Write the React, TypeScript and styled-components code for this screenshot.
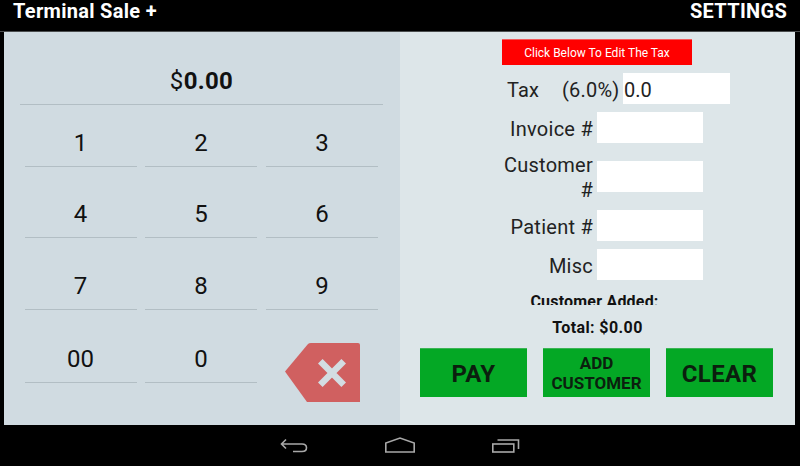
import React from "react";
import styled, { createGlobalStyle } from "styled-components";

const Global = createGlobalStyle`
  html, body { margin: 0; padding: 0; background: #000; }
  body { font-family: Roboto, "Liberation Sans", sans-serif; }
  * { box-sizing: border-box; }
`;

const Screen = styled.div`
  width: 800px;
  height: 466px;
  display: flex;
  flex-direction: column;
  background: #000;
  overflow: hidden;
`;

const TitleBar = styled.header`
  height: 32px;
  flex: none;
  display: flex;
  justify-content: space-between;
  align-items: flex-start;
  padding: 0 13px;
  color: #fff;
  font-size: 20px;
  font-weight: 700;
  line-height: 23px;
  letter-spacing: 0.3px;
  border-bottom: 1px solid #4a4d4e;
`;

const Main = styled.main`
  height: 393px;
  flex: none;
  display: flex;
  margin: 0 5px 0 4px;
`;

const LeftPanel = styled.section`
  width: 396px;
  flex: none;
  background: #d0dbe1;
  padding: 0 17px 0 16px;
`;

const Amount = styled.div`
  height: 73px;
  border-bottom: 1px solid #b2bec4;
  display: flex;
  align-items: flex-end;
  justify-content: center;
  padding-bottom: 9px;
  color: #111;
  font-size: 24px;
  line-height: 28px;
  letter-spacing: 0.3px;
  strong { font-weight: 700; }
`;

const Keypad = styled.div`
  display: grid;
  grid-template-columns: 120px 121px 112px;
  grid-template-rows: 62px 71px 72px 73px;
  padding-left: 5px;
`;

const Key = styled.button`
  width: 112px;
  padding: 0 0 9px;
  border: 0;
  border-bottom: 1px solid #b2bec4;
  background: transparent;
  display: flex;
  align-items: flex-end;
  justify-content: center;
  color: #111;
  font-family: inherit;
  font-size: 24px;
  line-height: 28px;
  &:nth-child(3n + 1) { padding-right: 1px; }
`;

const DeleteKey = styled.button`
  width: 75px;
  height: 59px;
  margin: 33px 0 0 19px;
  padding: 0;
  border: 0;
  background: transparent;
  svg { display: block; }
`;

const RightPanel = styled.section`
  flex: 1;
  background: #dde6e9;
  padding-top: 7px;
  display: flex;
  flex-direction: column;
`;

const Notice = styled.div`
  width: 190px;
  height: 26px;
  margin-left: 102px;
  background: #ff0000;
  border-top: 1px solid #f25a5a;
  color: #fff;
  font-size: 12px;
  line-height: 26px;
  text-align: center;
  flex: none;
`;

const TaxRow = styled.div`
  display: flex;
  align-items: center;
  height: 31px;
  margin: 8px 0 0 107px;
  color: #222;
  font-size: 20px;
  letter-spacing: 0.2px;
`;

const TaxLabel = styled.span`
  width: 55px;
  padding-top: 2px;
`;

const TaxRate = styled.span`
  width: 61px;
  padding-top: 2px;
`;

const Row = styled.div`
  display: flex;
  align-items: center;
  height: 31px;
  margin-top: ${(p: { $gap: number }) => p.$gap}px;
  padding-left: 100px;
`;

const Label = styled.label`
  width: 93px;
  padding-top: 3px;
  text-align: right;
  color: #222;
  font-size: 20px;
  line-height: 25px;
  letter-spacing: 0.25px;
`;

const Field = styled.input`
  width: ${(p: { $wide?: boolean }) => (p.$wide ? 107 : 106)}px;
  height: 31px;
  margin-left: ${(p: { $wide?: boolean }) => (p.$wide ? 0 : 4)}px;
  padding: 2px 0 0 1px;
  border: 0;
  border-radius: 0;
  outline: 0;
  background: #fff;
  color: #222;
  font-family: inherit;
  font-size: 20px;
`;

const Clipped = styled.div`
  height: 12px;
  margin-top: 13px;
  padding-right: 6px;
  overflow: hidden;
  flex: none;
  text-align: center;
  color: #111;
  font-size: 16px;
  font-weight: 700;
  line-height: 17px;
  letter-spacing: 0.2px;
`;

const Total = styled.div`
  margin-top: 13px;
  height: 20px;
  flex: none;
  text-align: center;
  color: #111;
  font-size: 16px;
  font-weight: 700;
  line-height: 20px;
  letter-spacing: 0.4px;
`;

const Actions = styled.div`
  display: flex;
  gap: 16px;
  margin: 10px 0 0 20px;
`;

const Action = styled.button`
  width: 107px;
  height: 49px;
  padding: ${(p: { $small?: boolean }) => (p.$small ? 0 : "2px 0 0")};
  border: 0;
  border-top: 1px solid #3bb455;
  border-radius: 0;
  background: #04a825;
  color: #0b1f0e;
  font-family: inherit;
  font-weight: 700;
  font-size: ${(p: { $small?: boolean }) => (p.$small ? 17 : 24)}px;
  line-height: ${(p: { $small?: boolean }) => (p.$small ? 20 : 28)}px;
  letter-spacing: ${(p: { $small?: boolean }) => (p.$small ? 0 : 0.4)}px;
`;

const NavBar = styled.nav`
  flex: 1;
  display: flex;
  justify-content: center;
  align-items: flex-start;
  gap: 75px;
  padding-top: 10px;
  svg { display: block; fill: none; stroke: #a8a8a8; stroke-width: 1.6; }
`;

const rows: [string, string, string][] = [
  ["1", "2", "3"],
  ["4", "5", "6"],
  ["7", "8", "9"],
];

export default function App() {
  return (
    <Screen>
      <Global />
      <TitleBar>
        <span>Terminal Sale +</span>
        <span>SETTINGS</span>
      </TitleBar>
      <Main>
        <LeftPanel>
          <Amount>
            <span>
              $<strong>0.00</strong>
            </span>
          </Amount>
          <Keypad>
            {rows.flat().map((k) => (
              <Key key={k}>{k}</Key>
            ))}
            <Key>00</Key>
            <Key>0</Key>
            <DeleteKey aria-label="Delete">
              <svg width="75" height="59" viewBox="0 0 75 59">
                <path d="M0 28.5 L23 1 Q24 0 26 0 H73 Q75 0 75 2 V59 H22 Z" fill="#d06060" />
                <path d="M35.3 18.3 L58.7 41.7 M58.7 18.3 L35.3 41.7" stroke="#d3dde2" strokeWidth="6.5" fill="none" />
              </svg>
            </DeleteKey>
          </Keypad>
        </LeftPanel>
        <RightPanel>
          <Notice>Click Below To Edit The Tax</Notice>
          <TaxRow>
            <TaxLabel>Tax</TaxLabel>
            <TaxRate>(6.0%)</TaxRate>
            <Field $wide readOnly value="0.0" />
          </TaxRow>
          <Row $gap={8}>
            <Label>Invoice #</Label>
            <Field readOnly value="" />
          </Row>
          <Row $gap={18}>
            <Label>Customer #</Label>
            <Field readOnly value="" />
          </Row>
          <Row $gap={18}>
            <Label>Patient #</Label>
            <Field readOnly value="" />
          </Row>
          <Row $gap={8}>
            <Label>Misc</Label>
            <Field readOnly value="" />
          </Row>
          <Clipped>Customer Added:</Clipped>
          <Total>Total: $0.00</Total>
          <Actions>
            <Action>PAY</Action>
            <Action $small>
              ADD
              <br />
              CUSTOMER
            </Action>
            <Action>CLEAR</Action>
          </Actions>
        </RightPanel>
      </Main>
      <NavBar>
        <svg width="32" height="20" viewBox="0 0 32 20">
          <path d="M9 4.5 L4.5 9 L9 13.5 M4.5 9 H25 Q29.5 9 29.5 12.7 Q29.5 16.5 25 16.5 H16" />
        </svg>
        <svg width="32" height="20" viewBox="0 0 32 20">
          <path d="M1.8 17 V8 L16 3 L30.2 8 V17 Z" />
        </svg>
        <svg width="32" height="20" viewBox="0 0 32 20">
          <rect x="1.8" y="9" width="21" height="8" />
          <path d="M6.5 5 H27.5 V14" />
        </svg>
      </NavBar>
    </Screen>
  );
}
